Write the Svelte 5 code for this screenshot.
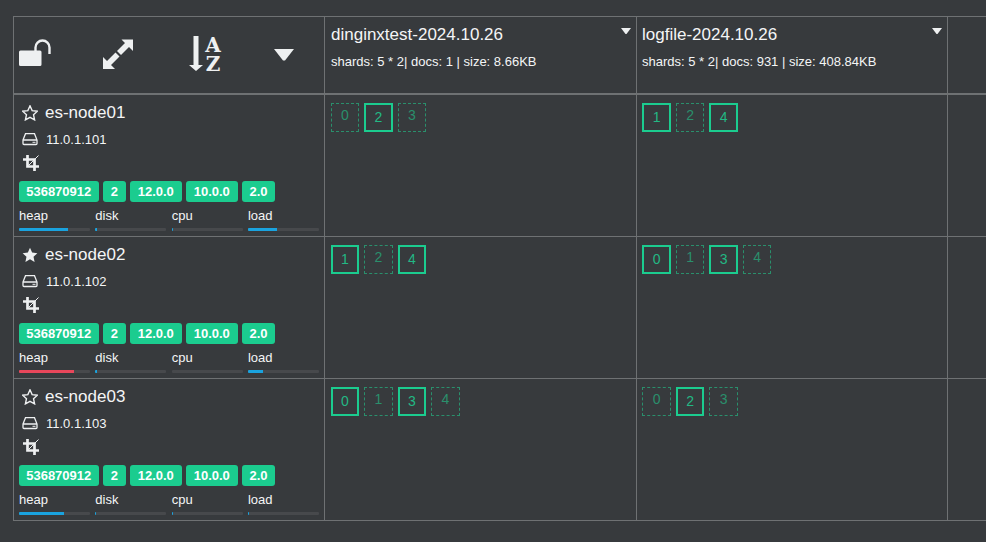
<script lang="ts">
  const indices = [
    { name: 'dinginxtest-2024.10.26', stats: 'shards: 5 * 2| docs: 1 | size: 8.66KB' },
    { name: 'logfile-2024.10.26', stats: 'shards: 5 * 2| docs: 931 | size: 408.84KB' }
  ];

  const nodes = [
    {
      name: 'es-node01', ip: '11.0.1.101', master: false,
      bars: [{ l: 'heap', v: 69 }, { l: 'disk', v: 3 }, { l: 'cpu', v: 1 }, { l: 'load', v: 41 }],
      shards: [
        [{ n: 0, p: false }, { n: 2, p: true }, { n: 3, p: false }],
        [{ n: 1, p: true }, { n: 2, p: false }, { n: 4, p: true }]
      ]
    },
    {
      name: 'es-node02', ip: '11.0.1.102', master: true,
      bars: [{ l: 'heap', v: 77, hot: true }, { l: 'disk', v: 3 }, { l: 'cpu', v: 0 }, { l: 'load', v: 21 }],
      shards: [
        [{ n: 1, p: true }, { n: 2, p: false }, { n: 4, p: true }],
        [{ n: 0, p: true }, { n: 1, p: false }, { n: 3, p: true }, { n: 4, p: false }]
      ]
    },
    {
      name: 'es-node03', ip: '11.0.1.103', master: false,
      bars: [{ l: 'heap', v: 63 }, { l: 'disk', v: 1 }, { l: 'cpu', v: 1 }, { l: 'load', v: 1 }],
      shards: [
        [{ n: 0, p: true }, { n: 1, p: false }, { n: 3, p: true }, { n: 4, p: false }],
        [{ n: 0, p: false }, { n: 2, p: true }, { n: 3, p: false }]
      ]
    }
  ];

  const badges = [
    { t: '536870912', w: 79.5 },
    { t: '2', w: 22.5 },
    { t: '12.0.0', w: 51.5 },
    { t: '10.0.0', w: 51.5 },
    { t: '2.0', w: 33 }
  ];
  const star = 'M8 1.500l2 4.500 4.900.6-3.600 3.300 1 4.800L8 12.300l-4.300 2.400 1-4.800L1.100 6.600l4.900-.6z';
</script>

<div class="cluster">
  <div class="cell head tools">
    <svg class="t-lock" viewBox="0 0 32 28" aria-hidden="true">
      <path class="fill" d="M0 13a1.500 1.500 0 0 1 1.500-1.500h19.500a1.500 1.500 0 0 1 1.500 1.500v12.500a1.500 1.500 0 0 1-1.500 1.500H1.500A1.500 1.500 0 0 1 0 25.500z" />
      <path class="line shackle" d="M16.500 12V8.500a7 7 0 0 1 14 0V15" />
    </svg>
    <svg class="t-expand" viewBox="0 0 30 30" aria-hidden="true">
      <path class="fill" d="M18.500.5H30V12l-4-4-8 8-4-4 8-8zM0 30V18l4 4 8.500-8.500 4 4L8 26l4 4z" />
    </svg>
    <svg class="t-sort" viewBox="0 -6 34 46" aria-hidden="true">
      <path class="fill" d="M4.500 0h5v29h4.500l-7 6-7-6h4.500z" />
      <text x="24" y="16" text-anchor="middle">A</text>
      <text x="24" y="35" text-anchor="middle">Z</text>
    </svg>
    <svg class="t-caret" viewBox="0 0 20 12" aria-hidden="true">
      <path class="fill" d="M0 0h20L11 11.500h-2z" />
    </svg>
  </div>

  {#each indices as idx, i}
    <div class="cell head index" class:later={i > 0}>
      <div class="idx-name">{idx.name}</div>
      <div class="idx-stats">{idx.stats}</div>
      <svg class="idx-caret" viewBox="0 0 10 6" aria-hidden="true"><path class="fill" d="M0 0h10L5.500 6h-1z" /></svg>
    </div>
  {/each}
  <div class="cell head end"></div>

  {#each nodes as node}
    <div class="cell node">
      <div class="node-name">
        <svg class="star" viewBox="0.5 1 15 14.500" aria-hidden="true">
          <path class={node.master ? 'fill' : 'line thin'} d={star} />
        </svg>
        <span>{node.name}</span>
      </div>
      <div class="node-ip">
        <svg class="drive" viewBox="0 0 16 14" aria-hidden="true">
          <path class="line thin" d="M1 8l2.500-6.300h9L15 8v3.500a1 1 0 0 1-1 1H2a1 1 0 0 1-1-1zM1 8h14" />
          <path class="fill" d="M10.500 9.800h3v1h-3z" />
        </svg>
        <span>{node.ip}</span>
      </div>
      <svg class="crop" viewBox="0 0 16 16" aria-hidden="true">
        <path class="line crop-line" d="M4.500 0v11.500H16M0 4.500h11.500V16" />
        <path class="line hair" d="M15.500.5L6 10" />
      </svg>
      <div class="badges">
        {#each badges as b}
          <span class="badge" style="width: {b.w}px">{b.t}</span>
        {/each}
      </div>
      <div class="bars">
        {#each node.bars as bar}
          <div class="bar">
            <div class="bar-label">{bar.l}</div>
            <div class="track">
              <div class="value" class:hot={bar.hot} style="width: {bar.v}%"></div>
            </div>
          </div>
        {/each}
      </div>
    </div>
    {#each node.shards as row, i}
      <div class="cell shards" class:later={i > 0}>
        {#each row as s}
          <span class="shard" class:primary={s.p}>{s.n}</span>
        {/each}
      </div>
    {/each}
    <div class="cell end"></div>
  {/each}
</div>

<style>
  :global(body) {
    margin: 0;
    background: #373a3d;
    overflow: hidden;
  }

  .cluster {
    display: grid;
    grid-template-columns: 311px 312px 311px 39px;
    grid-template-rows: 78px 142px 142px 142px;
    width: 973px;
    height: 505px;
    margin: 16px 0 0 13px;
    box-sizing: border-box;
    border-top: 1px solid #6e7173;
    border-left: 1px solid #6e7173;
    color: #f4f5f6;
    font-family: "Liberation Sans", Arial, sans-serif;
  }

  .cell {
    box-sizing: border-box;
    border-right: 1px solid #6e7173;
    border-bottom: 1px solid #6e7173;
    position: relative;
    min-width: 0;
  }

  .cell.head {
    border-bottom-width: 2px;
  }

  .cell.end {
    border-right: none;
  }

  .fill {
    fill: #eef0f1;
  }

  .line {
    fill: none;
    stroke: #eef0f1;
    stroke-width: 3;
  }

  .line.thin {
    stroke-width: 1.300;
  }

  .line.shackle {
    stroke-width: 2.400;
  }

  .line.crop-line {
    stroke-width: 2.700;
  }

  .line.hair {
    stroke-width: 1;
  }

  .tools svg {
    position: absolute;
  }

  .t-lock {
    left: 5px;
    top: 22px;
    width: 32px;
    height: 28px;
  }

  .t-expand {
    left: 89px;
    top: 22px;
    width: 30px;
    height: 30px;
  }

  .t-sort {
    left: 175px;
    top: 13px;
    width: 34px;
    height: 46px;
  }

  .t-sort text {
    fill: #eef0f1;
    font-family: "DejaVu Serif", "Liberation Serif", serif;
    font-weight: 700;
    font-size: 20px;
  }

  .t-caret {
    left: 260px;
    top: 32px;
    width: 20px;
    height: 12px;
  }

  .index {
    padding: 7px 6px 0;
  }

  .index.later {
    padding-left: 5px;
  }

  .idx-name {
    font-size: 17px;
    line-height: 22px;
    white-space: nowrap;
  }

  .idx-stats {
    margin-top: 8px;
    font-size: 13px;
    line-height: 16px;
    white-space: nowrap;
  }

  .idx-caret {
    position: absolute;
    top: 11px;
    right: 5px;
    width: 10px;
    height: 6px;
  }

  .node {
    padding: 6px 5px 0;
  }

  .node-name {
    display: flex;
    align-items: center;
    gap: 7px;
    height: 24px;
    font-size: 17px;
    padding-left: 3px;
  }

  .star {
    width: 16px;
    height: 16px;
  }

  .node-ip {
    display: flex;
    align-items: center;
    gap: 8px;
    height: 20px;
    margin-top: 4px;
    padding-left: 3px;
    font-size: 13px;
  }

  .drive {
    width: 16px;
    height: 14px;
  }

  .crop {
    display: block;
    width: 16px;
    height: 16px;
    margin: 6px 0 0 4px;
  }

  .badges {
    display: flex;
    gap: 4.500px;
    margin-top: 10px;
  }

  .badge {
    box-sizing: border-box;
    height: 21px;
    line-height: 21px;
    border-radius: 3px;
    background: #1bcc8f;
    color: #fff;
    font-size: 13px;
    font-weight: 700;
    text-align: center;
  }

  .bars {
    display: grid;
    grid-template-columns: repeat(4, 71px);
    column-gap: 5.330px;
    margin-top: 6px;
  }

  .bar-label {
    font-size: 13px;
    line-height: 16px;
  }

  .track {
    height: 3px;
    margin-top: 4px;
    background: #47494c;
    border-radius: 1px;
    overflow: hidden;
  }

  .value {
    height: 100%;
    background: #1aa3df;
  }

  .value.hot {
    background: #e8475b;
  }

  .shards {
    display: flex;
    align-items: flex-start;
    gap: 5px;
    padding: 8px 6px 0 5.600px;
  }

  .shards.later {
    padding-left: 5.400px;
  }

  .shard {
    box-sizing: border-box;
    width: 28.500px;
    height: 29px;
    line-height: 22px;
    border: 1px dashed #2a8f6c;
    color: #2a8f6c;
    font-size: 14px;
    text-align: center;
  }

  .shard.primary {
    border: 2px solid #1bcc8f;
    line-height: 24px;
    color: #23b884;
  }
</style>
